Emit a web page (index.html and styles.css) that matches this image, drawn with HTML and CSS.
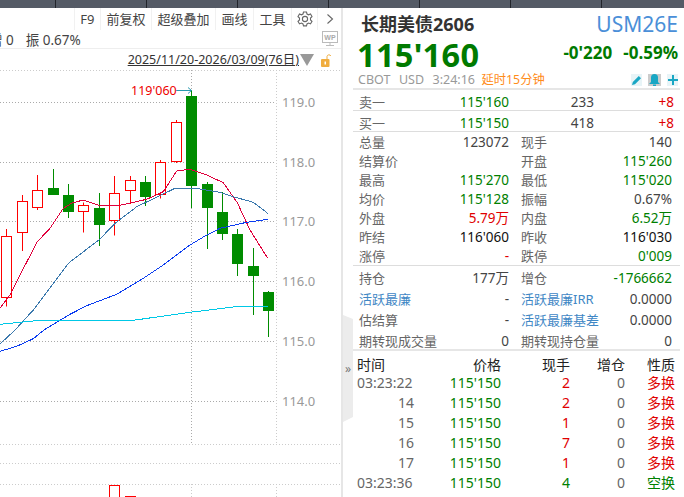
FILE: index.html
```html
<!DOCTYPE html>
<html lang="zh">
<head>
<meta charset="utf-8">
<title>USM26E</title>
<link rel="stylesheet" href="styles.css">
</head>
<body>
<div class="topbar"><i></i><i></i><i></i><i></i><i></i><i></i><i></i></div>
<div class="main">
  <section class="left">
    <nav class="tools">
      <span class="tool">F9</span>
      <span class="tool">前复权</span>
      <span class="tool">超级叠加</span>
      <span class="tool">画线</span>
      <span class="tool">工具</span>
      <span class="tool icon-tool"><svg width="16" height="16" viewBox="0 0 16 16" class="gear"><path d="M6.500 1h3l.5 2 1.600.8 1.900-.8 1.500 2.600-1.500 1.400v1.900l1.500 1.400-1.500 2.600-1.900-.8-1.600.8-.5 2h-3l-.5-2-1.600-.8-1.900.8L1 10.300l1.500-1.400V7L1 5.600l1.500-2.600 1.900.8L6 3z"/><circle cx="8" cy="8" r="2.600"/></svg></span>
      <span class="tool icon-tool last"><svg width="8" height="12" viewBox="0 0 8 12" class="chev"><path d="M1.500 1.500 6.500 6l-5 4.500"/></svg></span>
    </nav>
    <div class="info">
      <span class="clip">增 0</span>
      <span>振 0.67%</span>
      <svg class="wp" width="16" height="16" viewBox="0 0 16 16"><rect x="0.500" y="0.500" width="15" height="11"/><path d="M8 11.500v2.500M4 14.500h8"/><text x="8" y="9" text-anchor="middle">WP</text></svg>
    </div>
    <div class="range">
      <span class="dates">2025/11/20-2026/03/09(76日)</span>
      <svg width="14" height="12" viewBox="0 0 14 12" class="tri"><path d="M0 0h14L7 12z"/></svg>
      <svg width="10" height="14" viewBox="0 0 10 14" class="lock"><path class="shackle" d="M6 6V3.500a2 2 0 0 1 3.800-.5"/><rect x="0" y="6" width="8.500" height="8" rx="1"/><rect class="hole" x="3.500" y="8.500" width="1.500" height="3"/></svg>
    </div>
    <svg class="chart" width="341" height="427" viewBox="0 70 341 427">
      <g class="grid">
        <path d="M0 102.500H276M0 162.500H276M0 221.500H276M0 281.500H276M0 341.500H276M0 401.500H276M191.500 70V444"/>
      </g>
      <g class="gridlight">
        <path d="M0 70.500H341M276.500 70V444M0 444.500H341M0 463.500H341M0 484.500H341M191.500 484V497M276.500 484V497"/>
      </g>
      <g class="wick-r">
        <path d="M6.500 229V306.500M22.500 195V251M37.500 175V210M83.500 202.500V232.500M114.500 176V235.500M130.500 176V204M160.500 160V198.500M176.500 120V163"/>
      </g>
      <g class="up">
        <rect x="1.500" y="236.500" width="10" height="61"/>
        <rect x="17.500" y="201.500" width="10" height="31"/>
        <rect x="32.500" y="190.500" width="10" height="17"/>
        <rect x="78.500" y="205.500" width="10" height="6"/>
        <rect x="109.500" y="193.500" width="10" height="27"/>
        <rect x="125.500" y="180.500" width="10" height="10"/>
        <rect x="155.500" y="162.500" width="10" height="32"/>
        <rect x="171.500" y="122.500" width="10" height="39"/>
        <rect x="109.500" y="485.500" width="10" height="14"/>
      </g>
      <path class="wick-r" d="M125 496.500H136"/>
      <g class="wick-g">
        <path d="M53.500 169V188M68.500 184V218M99.500 193V246M145.500 176V206M191.500 90V208M207.500 182V249M222.500 192V240M237.500 229V276M253.500 248V315M268.500 291V337"/>
      </g>
      <g class="down">
        <rect x="48" y="188" width="11" height="7"/>
        <rect x="63" y="195" width="11" height="17"/>
        <rect x="94" y="208" width="11" height="17"/>
        <rect x="140" y="182" width="11" height="15"/>
        <rect x="186" y="96" width="11" height="90"/>
        <rect x="202" y="184" width="11" height="24"/>
        <rect x="217" y="212" width="11" height="22"/>
        <rect x="232" y="234" width="11" height="30"/>
        <rect x="248" y="266" width="11" height="10"/>
        <rect x="263" y="292" width="11" height="19"/>
      </g>
      <polyline class="ma ma1" points="0,308.300 10,295 20,275 37.300,241.700 50,228.300 63.300,208.300 72,203 83.300,200 100,205.700 116.700,206 133.300,202.300 146.700,199.300 163.300,191.700 176.700,171 190,169.300 206.700,175 223.300,182.700 237.300,202.700 250,230 267.700,258.300"/>
      <polyline class="ma ma2" points="0,344 15,330 33.300,310 50,288 68.300,263.300 100,239 115,223.300 136.700,206.700 163.300,194 175,188.300 200,189 220,192.300 233.300,196.700 253.300,202.300 267.700,213.300"/>
      <polyline class="ma ma3" points="0,351.300 16.700,346.300 33.300,338.700 44,330 70,314.300 86.700,305.700 116.700,294.300 143.300,278.300 163.300,265 190,245 205,236 220,228.300 246.700,222.300 267.700,219.300"/>
      <polyline class="ma ma4" points="0,324.300 33.300,321 133.300,320.300 190,312.300 233.300,307 267.700,306.300"/>
      <path class="arrow" d="M176 90.500H191.500M188 87.500l3.500 3-3.500 3"/>
      <text class="peak" x="131" y="95">119'060</text>
      <g class="axis">
        <text x="282" y="107">119.0</text>
        <text x="282" y="167">118.0</text>
        <text x="282" y="226">117.0</text>
        <text x="282" y="286">116.0</text>
        <text x="282" y="346">115.0</text>
        <text x="282" y="406">114.0</text>
      </g>
    </svg>
  </section>
  <div class="divider"></div>
  <section class="right">
    <div class="tab">»</div>
    <header class="head">
      <div class="title-row"><h1>长期美债2606</h1><span class="code">USM26E</span></div>
      <div class="price-row">
        <span class="price">115'160</span>
        <span class="chg">-0'220</span>
        <span class="chg">-0.59%</span>
      </div>
      <div class="meta-row">
        <span>CBOT</span><span>USD</span><span>3:24:16</span><span class="delay">延时15分钟</span>
        <span class="btns">
          <b class="btn"><svg width="10" height="10" viewBox="0 0 10 10"><path d="M0 10l.8-3L6.800 1l2.200 2.200-6 6z"/></svg></b>
          <b class="btn grey"><svg width="11" height="12" viewBox="0 0 11 12"><path d="M5.500 0a3.500 3.500 0 0 1 3.500 3.500V8l2 2H0l2-2V3.500A3.500 3.500 0 0 1 5.500 0zM4 10.500h3V12H4z"/></svg></b>
          <b class="btn"><svg width="10" height="10" viewBox="0 0 10 10"><path d="M4 0h2v4h4v2H6v4H4V6H0V4h4z"/></svg></b>
        </span>
      </div>
    </header>
    <div class="book">
      <div class="book-row"><span class="lbl">卖一</span><span class="g">115'160</span><span class="d">233</span><span class="r">+8</span></div>
      <div class="book-row"><span class="lbl">买一</span><span class="g">115'150</span><span class="d">418</span><span class="r">+8</span></div>
    </div>
    <div class="stats">
      <span class="lbl">总量</span><span class="d">123072</span><span class="lbl">现手</span><span class="d">140</span>
      <span class="lbl">结算价</span><span></span><span class="lbl">开盘</span><span class="g">115'260</span>
      <span class="lbl">最高</span><span class="g">115'270</span><span class="lbl">最低</span><span class="g">115'020</span>
      <span class="lbl">均价</span><span class="g">115'128</span><span class="lbl">振幅</span><span class="d">0.67%</span>
      <span class="lbl">外盘</span><span class="r">5.79万</span><span class="lbl">内盘</span><span class="g">6.52万</span>
      <span class="lbl">昨结</span><span class="k">116'060</span><span class="lbl">昨收</span><span class="k">116'030</span>
      <span class="lbl">涨停</span><span class="r">-</span><span class="lbl">跌停</span><span class="g">0'009</span>
    </div>
    <div class="stats2">
      <span class="lbl">持仓</span><span class="d">177万</span><span class="lbl">增仓</span><span class="g">-1766662</span>
      <span class="link">活跃最廉</span><span class="d">-</span><span class="link">活跃最廉IRR</span><span class="d">0.0000</span>
      <span class="lbl">估结算</span><span class="d">-</span><span class="link">活跃最廉基差</span><span class="d">0.0000</span>
      <span class="lbl">期转现成交量</span><span class="d">0</span><span class="lbl">期转现持仓量</span><span class="d">0</span>
    </div>
    <div class="trades">
      <span class="th tl">时间</span><span class="th">价格</span><span class="th">现手</span><span class="th">增仓</span><span class="th">性质</span>
      <span class="t0 tl">03:23:22</span><span class="g">115'150</span><span class="r">2</span><span class="t0">0</span><span class="r">多换</span>
      <span class="t0">14</span><span class="g">115'150</span><span class="r">2</span><span class="t0">0</span><span class="r">多换</span>
      <span class="t0">15</span><span class="g">115'150</span><span class="r">1</span><span class="t0">0</span><span class="r">多换</span>
      <span class="t0">16</span><span class="g">115'150</span><span class="r">7</span><span class="t0">0</span><span class="r">多换</span>
      <span class="t0">17</span><span class="g">115'150</span><span class="r">1</span><span class="t0">0</span><span class="r">多换</span>
      <span class="t0 tl">03:23:36</span><span class="g">115'150</span><span class="g">4</span><span class="t0">0</span><span class="g">空换</span>
    </div>
  </section>
</div>
</body>
</html>
```

FILE: styles.css
```css
* { box-sizing: border-box; }
html, body { margin: 0; padding: 0; }
body {
  width: 684px;
  height: 497px;
  overflow: hidden;
  background: #fff;
  font-family: "Noto Sans", "Noto Sans CJK SC", sans-serif;
  font-size: 13px;
  color: #444;
}
.topbar {
  height: 8px;
  background: #555b66;
  display: flex;
  padding-left: 55px;
}
.topbar i {
  width: 91px;
  height: 8px;
  flex: none;
  border-left: 1px solid #22252b;
}
.main { display: flex; height: 489px; }
.left { width: 341px; flex: none; display: flex; flex-direction: column; }
.divider { width: 2px; flex: none; background: #e6e6e6; }
.right { width: 341px; flex: none; position: relative; padding-left: 10px; }

.tools {
  height: 22px;
  display: flex;
  justify-content: flex-end;
  align-items: center;
  color: #444;
}
.tool {
  padding: 0 5.500px;
  border-left: 1px solid #f1f1f1;
  line-height: 22px;
  height: 22px;
  white-space: nowrap;
}
.icon-tool { display: flex; align-items: center; padding: 0 4.500px; }
.last { padding: 0 7.500px; }
.gear { fill: none; stroke: #666; stroke-width: 1.100; }
.chev { fill: none; stroke: #666; stroke-width: 1.100; }

.info {
  height: 19px;
  display: flex;
  align-items: center;
  gap: 12px;
  margin-left: -11px;
  padding-right: 3px;
  border-bottom: 1px solid #eee;
  font-size: 13.500px;
  position: relative;
}
.wp { margin-left: auto; fill: none; stroke: #bbb; stroke-width: 1; }
.wp text { font-size: 7px; font-weight: 700; fill: #aaa; stroke: none; font-family: "Liberation Sans", sans-serif; }

.range {
  height: 21px;
  display: flex;
  align-items: center;
  justify-content: flex-end;
  padding-right: 10px;
  gap: 1px;
}
.dates { font-size: 12.500px; color: #333; text-decoration: underline; line-height: 15px; white-space: nowrap; }
.tri { fill: #999; margin-right: 6px; }
.lock rect { fill: #f0ad3f; stroke: none; }
.lock .hole { fill: #fff; }
.lock .shackle { fill: none; stroke: #f0ad3f; stroke-width: 1; }

.chart { display: block; flex: none; }
.grid path { fill: none; stroke: #aaa; stroke-width: 1; stroke-dasharray: 1 2; }
.gridlight path { fill: none; stroke: #ccc; stroke-width: 1; stroke-dasharray: 1 2; }
.wick-r { fill: none; stroke: #f00; stroke-width: 1; }
.wick-g { fill: none; stroke: #008c00; stroke-width: 1; }
.up rect { fill: #fff; stroke: #f00; stroke-width: 1; }
.down rect { fill: #008c00; }
.ma { fill: none; stroke-width: 1; shape-rendering: crispEdges; }
.ma1 { stroke: #e0003c; }
.ma2 { stroke: #3a78ad; }
.ma3 { stroke: #0a3cf0; }
.ma4 { stroke: #00c8e6; }
.arrow { fill: none; stroke: #2a9ab0; stroke-width: 1; }
.peak { font-size: 12.500px; fill: #e00; }
.axis text { font-size: 13px; fill: #999; }

.tab {
  position: absolute;
  left: 0;
  top: 307px;
  width: 10px;
  height: 107px;
  background: #ececec;
  clip-path: polygon(0 0, 100% 4px, 100% 102px, 0 100%);
  display: flex;
  align-items: center;
  justify-content: center;
  color: #777;
  font-size: 12px;
}

.g { color: #008000; }
.r { color: #e00000; }
.d { color: #444; }
.k { color: #111; }
.lbl { color: #666; font-size: 13px; }
.link { color: #3f87c5; font-size: 13px; }

.head { height: 82px; border-bottom: 2px solid #e6e6e6; margin-right: 4px; padding-left: 5px; padding-right: 2px; }
.title-row { display: flex; justify-content: space-between; align-items: center; height: 30px; padding-top: 2px; }
h1 { margin: 0; font-size: 18px; font-weight: 700; color: #333; line-height: 24px; padding-left: 3px; }
.code { font-size: 21px; color: #4a8fd8; line-height: 24px; }
.price-row { display: flex; align-items: center; height: 34px; }
.price { font-size: 32.500px; font-weight: 700; color: #007a00; line-height: 34px; letter-spacing: .3px; margin-left: -1px; margin-right: auto; }
.chg { font-size: 17px; font-weight: 700; color: #007a00; margin-left: 11px; line-height: 22px; margin-top: -4px; }
.meta-row { display: flex; align-items: center; gap: 8.500px; height: 16px; color: #999; font-size: 12.500px; line-height: 14px; }
.btns { margin-left: auto; display: flex; gap: 6px; }
.btn { width: 11px; height: 12px; background: #e8f4f7; display: flex; align-items: center; justify-content: center; fill: #1aa7c4; }
.grey { width: 13px; background: #ccc; }
.delay { color: #ff8c1a; font-size: 12.300px; margin-left: -2px; }

.book-row {
  display: grid;
  grid-template-columns: 65px 85px 85px 80px;
  height: 21px;
  line-height: 19px;
  padding-top: 3px;
  border-bottom: 1px solid #ddd;
  padding-left: 6px;
  margin-right: 4px;
  font-size: 13.500px;
  text-align: right;
}
.book-row .lbl { text-align: left; }

.stats, .stats2 {
  display: grid;
  grid-template-columns: 65px 85px 88px 75px;
  padding-left: 6px;
  margin-right: 4px;
  font-size: 13.500px;
  text-align: right;
  white-space: nowrap;
}
.stats { grid-auto-rows: 19px; line-height: 19px; height: 134px; padding-top: 1px; border-bottom: 1px solid #ddd; }
.stats2 { grid-auto-rows: 21px; line-height: 21px; height: 85px; border-bottom: 2px solid #e6e6e6; padding-top: 2px; }
.stats span:nth-child(4n+1), .stats2 span:nth-child(4n+1), .stats span:nth-child(4n+3), .stats2 span:nth-child(4n+3) { text-align: left; }
.stats span:nth-child(4n+3), .stats2 span:nth-child(4n+3) { padding-left: 12px; }

.trades {
  display: grid;
  grid-template-columns: 57px 87px 69px 55px 50px;
  grid-template-rows: 17px repeat(6, 20px);
  line-height: 20px;
  font-size: 14px;
  padding-left: 4px;
  padding-top: 5px;
  text-align: right;
  white-space: nowrap;
}
.th { color: #222; line-height: 17px; }
.t0 { color: #666; }
.tl { text-align: left; }
```
